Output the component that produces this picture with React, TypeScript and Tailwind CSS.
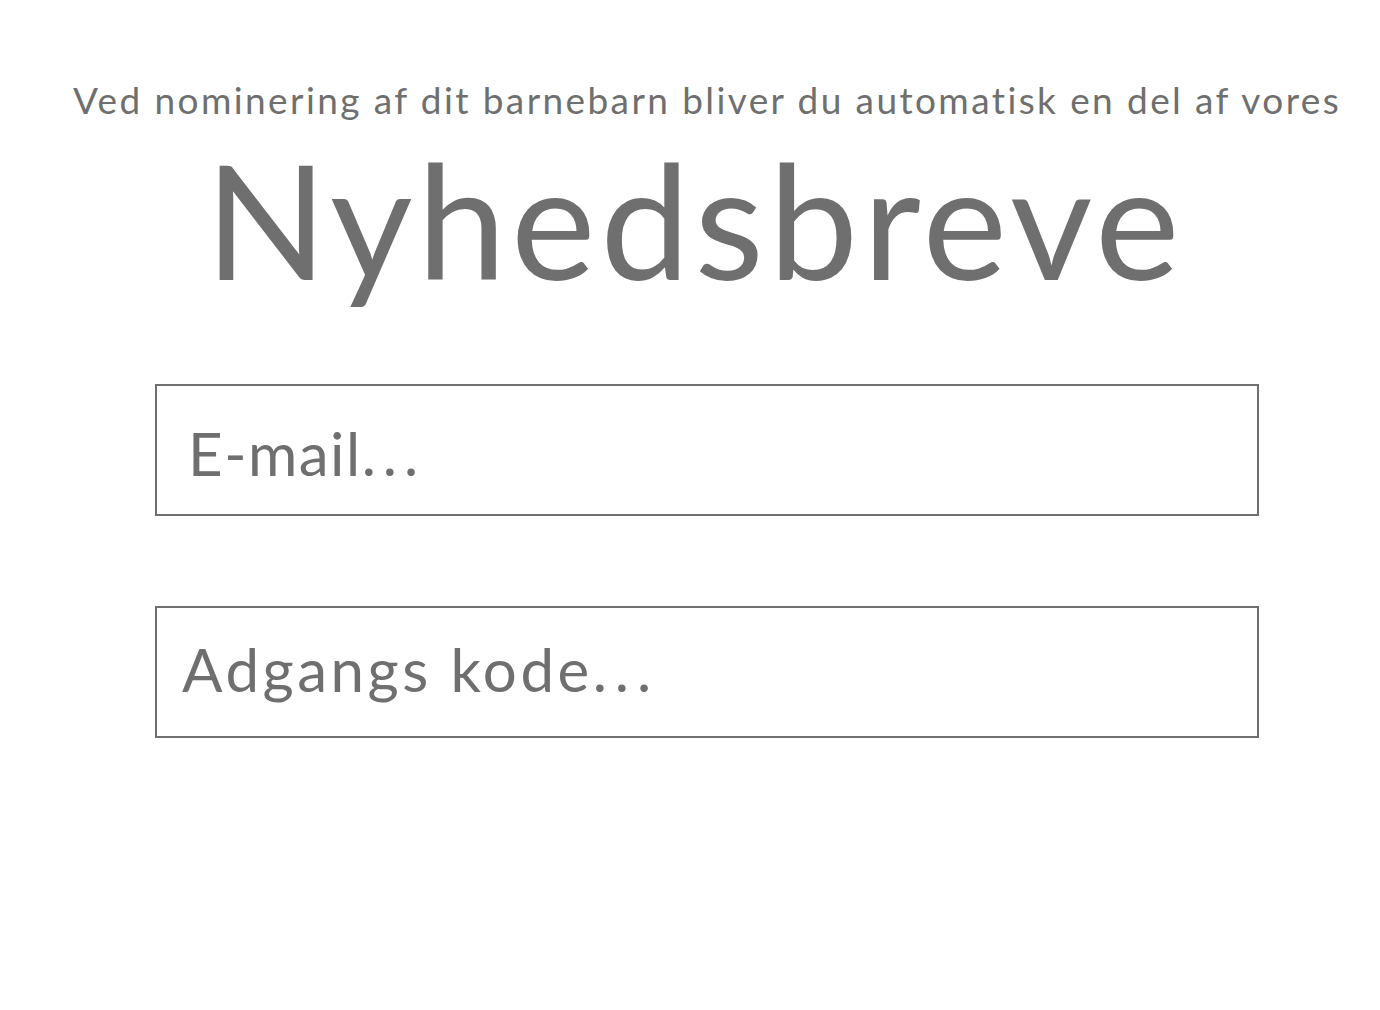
export default function App() {
  return (
    <div className="min-h-[1010px] w-[1380px] bg-white text-[#6f6f6f]" style={{ fontFamily: "Lato, 'Noto Sans', sans-serif" }}>
      <div className="flex flex-col items-center pl-[34px]">
        <p className="mt-[72px] whitespace-nowrap text-[37px] leading-[56px] tracking-[2.4px]">
          Ved nominering af dit barnebarn bliver du automatisk en del af vores
        </p>
        <h1 className="-ml-[25px] text-[160px] font-normal leading-[180px] tracking-[4.7px]">Nyhedsbreve</h1>
        <div className="mt-[76px] flex w-[1104px] flex-col gap-[90px]">
          <div className="h-[132px] border-2 border-[#707070] pl-[31px] pt-[32px] text-[60px] leading-[70px] tracking-[1.5px]">
            E-mail<span className="tracking-[7px]">...</span>
          </div>
          <div className="h-[132px] border-2 border-[#707070] pl-[25px] pt-[26px] text-[60px] leading-[70px] tracking-[3.5px]">
            Adgangs kode<span className="tracking-[8px]">...</span>
          </div>
        </div>
      </div>
    </div>
  );
}
